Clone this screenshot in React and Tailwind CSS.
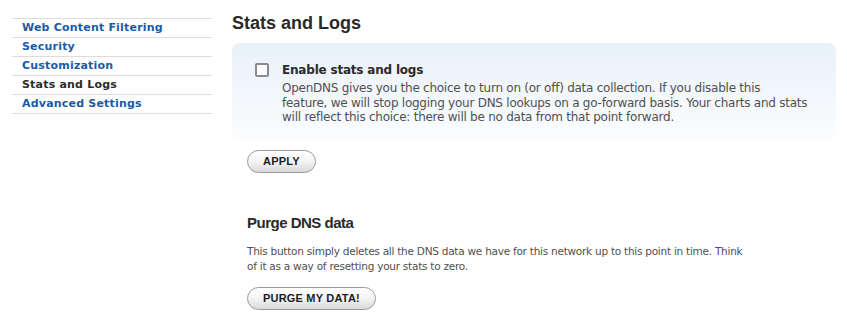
import { useState } from 'react';

const navItems = [
  { label: 'Web Content Filtering' },
  { label: 'Security' },
  { label: 'Customization' },
  { label: 'Stats and Logs', active: true },
  { label: 'Advanced Settings' },
];

function PillButton({ children }) {
  return (
    <button className="h-[23px] px-[15px] rounded-full border border-[#9a9a9a] bg-gradient-to-b from-white via-[#f4f4f4] to-[#d9d9d9] text-[11px] font-bold text-[#1e1e1e] font-['Liberation_Sans',Arial,sans-serif] leading-none tracking-[0.2px]">
      {children}
    </button>
  );
}

export default function App() {
  const [enabled, setEnabled] = useState(false);

  return (
    <div className="w-[847px] h-[328px] bg-white flex font-['DejaVu_Sans',Verdana,sans-serif] overflow-hidden">
      {/* Sidebar */}
      <div className="w-[200px] ml-[12px] mt-[18px] shrink-0">
        <ul className="border-t border-[#dcdcdc]">
          {navItems.map(item => (
            <li
              key={item.label}
              className={`h-[19px] border-b border-[#dcdcdc] pl-[10px] flex items-center text-[11px] font-bold tracking-[0.2px] ${item.active ? 'text-[#2b2b2b]' : 'text-[#1c5aa6]'}`}
            >
              {item.label}
            </li>
          ))}
        </ul>
      </div>

      {/* Main */}
      <div className="ml-[20px] w-[604px] shrink-0">
        <h1 className="mt-[12px] text-[18px] leading-[22px] font-bold text-[#2a2a2a] font-['Liberation_Sans',Arial,sans-serif]">
          Stats and Logs
        </h1>

        <div className="mt-[9px] h-[97px] rounded-[7px] bg-gradient-to-b from-[#e9f1f9] to-[#fbfdfe] pl-[23px] pt-[20px] flex gap-[13px]">
          <button
            onClick={() => setEnabled(!enabled)}
            className="w-[14px] h-[14px] border-2 border-[#8a8a96] rounded-[2px] bg-white shrink-0"
          >
            {enabled && <span className="block w-full h-full bg-[#1c5aa6]" />}
          </button>
          <div className="w-[560px]">
            <div className="text-[12px] font-bold text-[#2b2b2b] leading-[14px] tracking-[-0.2px]">
              Enable stats and logs
            </div>
            <p className="mt-[4px] text-[12px] leading-[14.5px] text-[#505050] tracking-[-0.25px]">
              OpenDNS gives you the choice to turn on (or off) data collection. If you disable this<br />
              feature, we will stop logging your DNS lookups on a go-forward basis. Your charts and stats<br />
              will reflect this choice: there will be no data from that point forward.
            </p>
          </div>
        </div>

        <div className="pl-[15px]">
          <div className="mt-[8px]">
            <PillButton>APPLY</PillButton>
          </div>

          <h2 className="mt-[40px] text-[15px] leading-[20px] font-bold text-[#2a2a2a] font-['Liberation_Sans',Arial,sans-serif] tracking-[-0.5px]">
            Purge DNS data
          </h2>
          <p className="mt-[11px] w-[496px] text-[10.5px] leading-[15px] text-[#505050] tracking-[-0.25px]">
            This button simply deletes all the DNS data we have for this network up to this point in time. Think of it as a way of resetting your stats to zero.
          </p>
          <div className="mt-[11px]">
            <PillButton>PURGE MY DATA!</PillButton>
          </div>
        </div>
      </div>
    </div>
  );
}
